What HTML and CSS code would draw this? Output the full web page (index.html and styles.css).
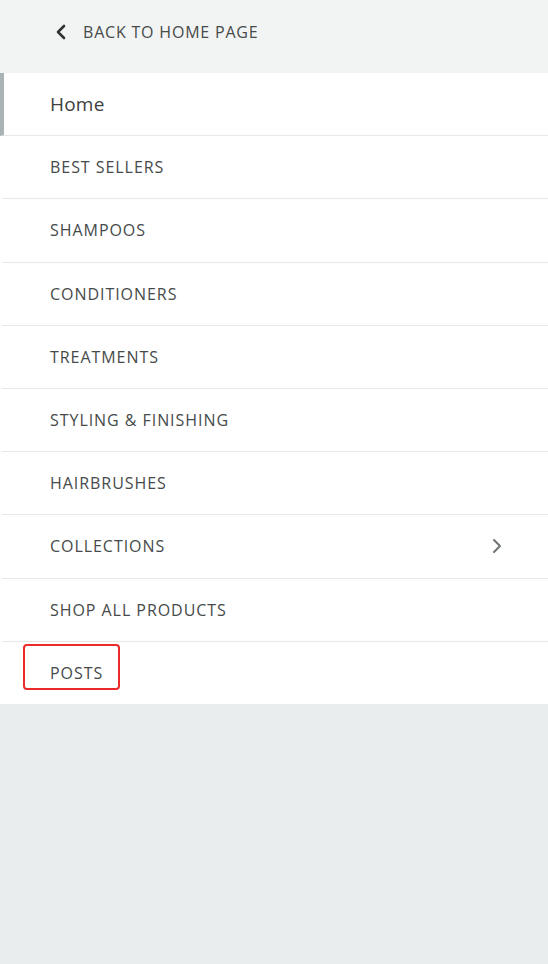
FILE: index.html
```html
<!DOCTYPE html>
<html lang="en">
<head>
  <meta charset="UTF-8" />
  <meta name="viewport" content="width=device-width, initial-scale=1.0">
  <title>Menu</title>
  <link rel="stylesheet" href="styles.css">
</head>
<body>
  <nav class="drawer">
    <a class="back-link" href="#">
      <svg class="back-icon" width="12" height="16" viewBox="0 0 12 16" aria-hidden="true">
        <path d="M9 2 L3 8 L9 14" fill="none" stroke="#2f3333" stroke-width="2.6" stroke-linecap="round" stroke-linejoin="round"/>
      </svg>
      <span>BACK TO HOME PAGE</span>
    </a>
    <ul class="menu">
      <li class="menu-item active"><a href="#">Home</a></li>
      <li class="menu-item"><a href="#">BEST SELLERS</a></li>
      <li class="menu-item"><a href="#">SHAMPOOS</a></li>
      <li class="menu-item"><a href="#">CONDITIONERS</a></li>
      <li class="menu-item"><a href="#">TREATMENTS</a></li>
      <li class="menu-item"><a href="#">STYLING &amp; FINISHING</a></li>
      <li class="menu-item"><a href="#">HAIRBRUSHES</a></li>
      <li class="menu-item has-sub">
        <a href="#">COLLECTIONS
          <svg class="sub-icon" width="10" height="16" viewBox="0 0 10 16" aria-hidden="true">
            <path d="M2 2 L8 8 L2 14" fill="none" stroke="#6f7373" stroke-width="2" stroke-linecap="round" stroke-linejoin="round"/>
          </svg>
        </a>
      </li>
      <li class="menu-item"><a href="#">SHOP ALL PRODUCTS</a></li>
      <li class="menu-item posts"><a href="#">POSTS</a><span class="highlight"></span></li>
    </ul>
  </nav>
</body>
</html>
```

FILE: styles.css
```css
html, body {
  height: 100%;
  margin: 0;
  padding: 0;
}
body {
  background: #e9eded;
  font-family: "Open Sans", "Noto Sans", Arial, sans-serif;
  color: #464a4a;
}
.drawer {
  background: #fff;
}
.back-link {
  display: flex;
  align-items: center;
  height: 73px;
  box-sizing: border-box;
  padding: 0 0 10px 55px;
  background: #f2f3f3;
  color: #464a4a;
  text-decoration: none;
  font-size: 16px;
  letter-spacing: 0.8px;
}
.back-icon {
  margin-right: 16px;
  margin-top: 1px;
}
.menu {
  list-style: none;
  margin: 0;
  padding: 0;
}
.menu-item {
  position: relative;
  border-bottom: 1px solid #e7e9e9;
  margin-left: 2px;
}
.menu-item:last-child {
  border-bottom: none;
}
.menu-item a {
  display: flex;
  align-items: center;
  justify-content: space-between;
  height: 62.2px;
  padding: 0 46px 0 48px;
  color: #464a4a;
  text-decoration: none;
  font-size: 16px;
  letter-spacing: 0.95px;
}
.menu-item.active {
  margin-left: 0;
  border-left: 4px solid #aab4b4;
}
.menu-item.active a {
  padding-left: 46px;
  font-size: 19px;
  letter-spacing: 0.2px;
  color: #3d4040;
}
.highlight {
  position: absolute;
  left: 21px;
  top: 2px;
  width: 93px;
  height: 42px;
  border: 2px solid #ec2a2a;
  border-radius: 4px;
}
```
